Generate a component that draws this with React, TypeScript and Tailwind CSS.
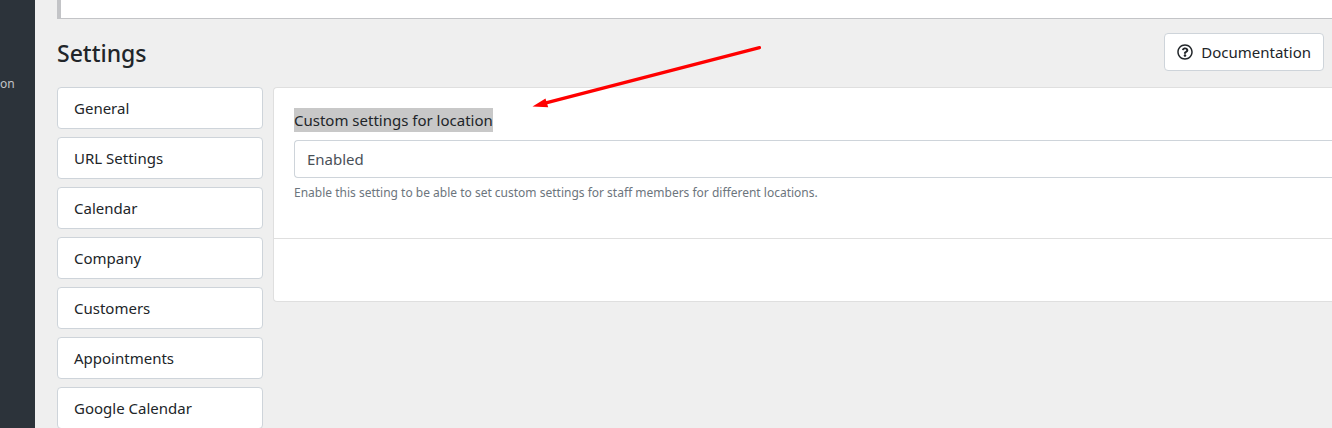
import { FaRegQuestionCircle } from 'react-icons/fa';

const sections = [
  'General',
  'URL Settings',
  'Calendar',
  'Company',
  'Customers',
  'Appointments',
  'Google Calendar',
];

function Sidebar() {
  return (
    <aside className="flex w-[35px] shrink-0 flex-col items-start overflow-hidden bg-[#2c333a] pt-[74px]">
      <a href="#section" className="text-xs leading-5 text-[#c3c4c7]">
        on
      </a>
    </aside>
  );
}

function SettingsNav() {
  return (
    <nav aria-label="Settings sections" className="flex w-[206px] shrink-0 flex-col gap-2">
      {sections.map((name) => (
        <a
          key={name}
          href="#settings"
          className="flex h-[42px] items-center rounded-sm border border-[#ced4da] bg-white px-4 text-[15px] leading-6 text-[#212529]"
        >
          {name}
        </a>
      ))}
    </nav>
  );
}

function LocationCard() {
  return (
    <form className="min-w-0 flex-1 rounded-l-sm border border-r-0 border-[#dfdfdf] bg-white">
      <div className="flex flex-col items-start pt-5 pb-[35px] pl-5">
        <label htmlFor="location-custom" className="bg-[#c8c8c8] text-[15px] leading-6 text-[#212529]">
          Custom settings for location
        </label>
        <select
          id="location-custom"
          className="mt-2 h-[38px] w-full appearance-none rounded-l-sm border border-r-0 border-[#ced4da] bg-white px-3 text-[15px] text-[#495057]"
        >
          <option>Enabled</option>
          <option>Disabled</option>
        </select>
        <p className="mt-1 text-xs leading-[21px] text-[#6c757d]">
          Enable this setting to be able to set custom settings for staff members for different locations.
        </p>
      </div>
      <div className="h-[63px] border-t border-[#dfdfdf]" />
    </form>
  );
}

function Arrow() {
  return (
    <svg
      aria-hidden="true"
      className="pointer-events-none absolute top-[40px] left-[525px]"
      width="245"
      height="74"
      viewBox="525 40 245 74"
    >
      <path d="M546 102.9 759.5 47.6" stroke="#f00" strokeWidth="3.2" strokeLinecap="round" />
      <path d="M532.5 106.5 545.5 98.6 548.2 107.3Z" fill="#f00" />
    </svg>
  );
}

export default function App() {
  return (
    <div className="relative flex h-screen overflow-hidden bg-[#efefef] font-['Noto_Sans','Open_Sans',sans-serif]">
      <Sidebar />
      <main className="min-w-0 flex-1 pl-[22px]">
        <div className="h-[19px] border-b border-l-4 border-[#c3c4c7] bg-white" />
        <header className="flex items-center justify-between pt-[14px] pr-2 pb-4">
          <h1 className="pt-0.5 text-[23px] leading-8 font-medium text-[#212529]">Settings</h1>
          <a
            href="#documentation"
            className="flex h-[38px] items-center gap-2 rounded-sm border border-[#ced4da] bg-white px-3 text-[15px] leading-6 text-[#212529]"
          >
            <FaRegQuestionCircle className="size-4" />
            Documentation
          </a>
        </header>
        <div className="flex items-start gap-[10px]">
          <SettingsNav />
          <LocationCard />
        </div>
      </main>
      <Arrow />
    </div>
  );
}
